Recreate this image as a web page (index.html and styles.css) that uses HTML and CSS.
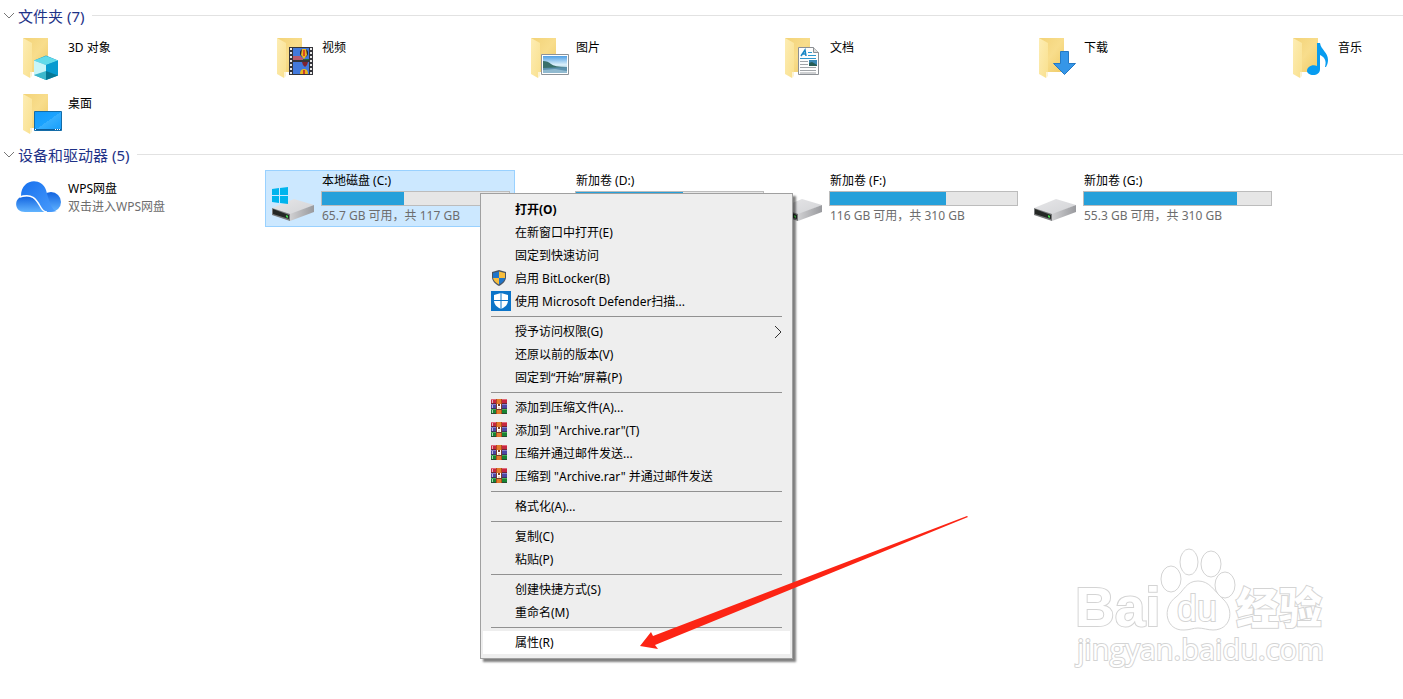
FILE: index.html
```
<!DOCTYPE html>
<html lang="zh-CN">
<head>
  <meta charset="utf-8">
  <title>此电脑</title>
  <meta name="viewport" content="width=device-width, initial-scale=1">
  <link rel="stylesheet" href="styles.css">
</head>
<body>

<!-- shared drawings -->
<svg class="defs" aria-hidden="true">
  <defs>
    <linearGradient id="gBack" x1="0" y1="0" x2="1" y2="1"><stop offset="0" stop-color="#f3d378"/><stop offset=".5" stop-color="#f8dd8c"/><stop offset="1" stop-color="#efcb67"/></linearGradient>
    <linearGradient id="gFront" x1="0" y1="0" x2="1" y2="1"><stop offset="0" stop-color="#fdedb4"/><stop offset="1" stop-color="#f9e08e"/></linearGradient>
    <linearGradient id="gDesk" x1="0" y1="0" x2="1" y2="1"><stop offset="0" stop-color="#129bfa"/><stop offset=".5" stop-color="#1ba3ff"/><stop offset=".5" stop-color="#37b0ff"/><stop offset="1" stop-color="#149dfb"/></linearGradient>
    <linearGradient id="gSky" x1="0" y1="0" x2="0" y2="1"><stop offset="0" stop-color="#4f9fe4"/><stop offset=".5" stop-color="#d8eefa"/><stop offset="1" stop-color="#9dc8dd"/></linearGradient>
    <linearGradient id="gCloud" x1="0" y1="0" x2="1" y2="1"><stop offset="0" stop-color="#1670ee"/><stop offset="1" stop-color="#4b9dfc"/></linearGradient>
    <linearGradient id="gCloud2" x1="0" y1="0" x2="0" y2="1"><stop offset="0" stop-color="#1264e0"/><stop offset="1" stop-color="#62b4ff"/></linearGradient>
    <linearGradient id="gTop" x1="0" y1="0" x2="1" y2="1"><stop offset="0" stop-color="#e6e6e8"/><stop offset="1" stop-color="#d2d3d6"/></linearGradient>
    <linearGradient id="gSide" x1="0" y1="0" x2="1" y2="0"><stop offset="0" stop-color="#d0d0d2"/><stop offset="1" stop-color="#999a9e"/></linearGradient>
    <symbol id="folder" viewBox="0 0 56 56">
      <path d="M12 7h25v34H20z" fill="url(#gBack)"/>
      <path d="M21 12v29l-1 1-1 5-7-4V7z" fill="url(#gFront)"/>
      <path d="M19 41l2 0v4l-2 2z" fill="#fdf3d3"/>
    </symbol>
    <symbol id="drive" viewBox="0 0 56 56">
      <path d="M7 38L29 29l20 6-24 10z" fill="url(#gTop)"/>
      <path d="M25 44l24-9v7L25 51z" fill="url(#gSide)"/>
      <path d="M7 38l18 6v7L7 45z" fill="#77797b"/>
      <path d="M8 39l16 6v4L8 44z" fill="#242725"/>
      <path d="M21 45l2 1v2l-2-1z" fill="#43d94c"/>
    </symbol>
    <symbol id="rar" viewBox="0 0 16 16">
      <path d="M0 0h16v5H0z" fill="#c6273f"/><path d="M0 0h16v1H0z" fill="#e2677a"/>
      <path d="M0 5h16v5H0z" fill="#4d47a5"/><path d="M0 5h16v1H0z" fill="#8580cc"/>
      <path d="M0 10h16v5H0z" fill="#188332"/><path d="M0 10h16v1H0z" fill="#47ae57"/>
      <path d="M0 4h16v1H0zM0 9h16v1H0zM0 14h16v1H0z" fill="#30262e" opacity=".6"/>
      <path d="M1 1h1v3H1zM1 6h1v3H1zM1 11h1v3H1z" fill="#eee" opacity=".7"/>
      <path d="M5 0h6v15H5z" fill="#b04a1c"/><path d="M6 0h4v15H6z" fill="#e47b2b"/>
      <path d="M5 5h6v6H5z" fill="#7a3c2d"/>
      <path d="M6 10V5h1v2h2V5h1v5z" fill="#fff"/><path d="M7 8h2v2H7z" fill="#f1d9c8"/>
    </symbol>
  </defs>
</svg>

<main class="explorer">
  <section>
    <h2 class="group"><svg class="chevron" viewBox="0 0 12 8"><path d="M1 1l5 5 5-5"/></svg>文件夹 (7)</h2>
    <ul class="tiles">
      <li class="tile">
        <svg class="icon" viewBox="0 0 56 56"><use href="#folder"/>
          <path d="M35 24.500l12 5v15L35 49l-12-5V29.500z" fill="#1b9bc6"/>
          <path d="M35 25l12 4.500L35 34l-12-4.500z" fill="#62dbea"/><path d="M23 29.500L35 34v9l-12 1z" fill="#c8f5f8"/>
          <path d="M35 34l12-4.500v15L35 41z" fill="#079bd0"/><path d="M23 44l12-4v9z" fill="#3cb8cc"/><path d="M35 40l12 4.500L35 49z" fill="#067895"/>
        </svg>
        <div class="info"><span class="name">3D 对象</span></div>
      </li>
      <li class="tile">
        <svg class="icon" viewBox="0 0 56 56"><use href="#folder"/>
          <path d="M24 16h24v28H24z" fill="#34343a"/>
          <path d="M28 17h16v12H28zM28 31h16v12H28z" fill="#4279dc"/>
          <path d="M28 25h7l4 3v1H28z" fill="#b75b70"/><path d="M38 28h6v1h-6z" fill="#256b3b"/>
          <ellipse cx="39" cy="22" rx="4" ry="4" fill="#2a242c"/><path d="M37 18h4l1 6-3 4-3-4z" fill="#eeb720"/><path d="M38 19h2v6h-2z" fill="#d84b24"/>
          <path d="M37 31h6l-1 3-2 2-2-2z" fill="#7f2330"/><path d="M35 43q0-5 4-5t4 5z" fill="#e9b71e"/><path d="M38 39h2v4h-2z" fill="#c83e30"/>
          <path d="M26 17v27M46 17v27" stroke="#e8e8e8" stroke-width="2" stroke-dasharray="2 2"/>
        </svg>
        <div class="info"><span class="name">视频</span></div>
      </li>
      <li class="tile">
        <svg class="icon" viewBox="0 0 56 56"><use href="#folder"/>
          <path d="M22.500 23.500h27v20h-27z" fill="#fff" stroke="#8c9298"/>
          <path d="M24 25h24v17H24z" fill="url(#gSky)"/><path d="M24 30q5 0 8 3t16 3v2H24z" fill="#39706a"/><path d="M24 37l24-1v6H24z" fill="#5b91ae"/><path d="M24 39l12-1 12 2v2H24z" fill="#91bad0"/>
        </svg>
        <div class="info"><span class="name">图片</span></div>
      </li>
      <li class="tile">
        <svg class="icon" viewBox="0 0 56 56"><use href="#folder"/>
          <path d="M25.500 16.500h15l5 5v22h-20z" fill="#fdfdfd" stroke="#8b8f94"/><path d="M40.500 16.500v5h5" fill="#ddd" stroke="#8b8f94"/>
          <path d="M28 25l4-6 1 6M29 23h4" fill="none" stroke="#1887c5" stroke-width="1.500"/>
          <path d="M35 21.500h4M35 24.500h8M27 27.500h16" stroke="#2e97cd"/>
          <path d="M27 30.500h8M27 33.500h8M27 36.500h16M27 39.500h16M27 42h16" stroke="#a0a4a8"/>
          <path d="M36 29h8v6h-8z" fill="#3987b4"/><path d="M36 32l3-1 5 3v1h-8z" fill="#275d55"/>
        </svg>
        <div class="info"><span class="name">文档</span></div>
      </li>
      <li class="tile">
        <svg class="icon" viewBox="0 0 56 56"><use href="#folder"/>
          <path d="M33.500 20.500h8v12h7L37.500 43.500l-11-11h7z" fill="#3596e8" stroke="#2479c4"/>
        </svg>
        <div class="info"><span class="name">下载</span></div>
      </li>
      <li class="tile">
        <svg class="icon" viewBox="0 0 56 56"><use href="#folder"/>
          <path d="M36 12h3c1 7 8 9 8 17 0 3-1 5-2 7h-1c2-7-1-10-5-12v14c0 4-3 6-7 6-3 0-6-2-6-4 0-4 5-7 10-5z" fill="#079cf0"/>
        </svg>
        <div class="info"><span class="name">音乐</span></div>
      </li>
      <li class="tile">
        <svg class="icon" viewBox="0 0 56 56"><use href="#folder"/>
          <path d="M23.500 24.500h27v19h-27z" fill="url(#gDesk)" stroke="#146ca8"/><path d="M24 42.500h26" stroke="#0c5d9c"/><path d="M24 42.500h1M44 42.500h1M46 42.500h1M48 42.500h1" stroke="#fff"/>
        </svg>
        <div class="info"><span class="name">桌面</span></div>
      </li>
    </ul>
  </section>

  <section>
    <h2 class="group"><svg class="chevron" viewBox="0 0 12 8"><path d="M1 1l5 5 5-5"/></svg>设备和驱动器 (5)</h2>
    <ul class="tiles devices">
      <li class="tile">
        <svg class="icon" viewBox="0 0 56 56">
          <circle cx="40" cy="32" r="10" fill="url(#gCloud2)"/>
          <path d="M10 26C10 8 31 7 35 20c2 7 6 22 11 21-3 1-10 1-13 1-6 0-8-18-23-16z" fill="url(#gCloud)"/>
          <path d="M10 27c12-3 15 4 19 10 2 3 4 5 6 5H14C3 42 3 29 10 27z" fill="url(#gCloud2)"/>
          <path d="M9 27c12-4 16 2 20 9 2 4 4 6 7 6" fill="none" stroke="#fff" stroke-width="1.500"/>
        </svg>
        <div class="info"><span class="name">WPS网盘</span><span class="detail">双击进入WPS网盘</span></div>
      </li>
      <li class="tile drive selected">
        <svg class="icon" viewBox="0 0 56 56"><use href="#drive"/>
          <path d="M7 19l7-1v7H7zM15 18l8-1v8h-8zM7 26h7v7l-7-1zM15 26h8v8l-8-1z" fill="#00b4ed"/>
        </svg>
        <div class="info"><label class="name" for="diskC">本地磁盘 (C:)</label><progress id="diskC" max="100" value="44"></progress><span class="detail">65.7 GB 可用，共 117 GB</span></div>
      </li>
      <li class="tile drive">
        <svg class="icon" viewBox="0 0 56 56"><use href="#drive"/></svg>
        <div class="info"><label class="name" for="diskD">新加卷 (D:)</label><progress id="diskD" max="100" value="57"></progress></div>
      </li>
      <li class="tile drive">
        <svg class="icon" viewBox="0 0 56 56"><use href="#drive"/></svg>
        <div class="info"><label class="name" for="diskF">新加卷 (F:)</label><progress id="diskF" max="100" value="62"></progress><span class="detail">116 GB 可用，共 310 GB</span></div>
      </li>
      <li class="tile drive">
        <svg class="icon" viewBox="0 0 56 56"><use href="#drive"/></svg>
        <div class="info"><label class="name" for="diskG">新加卷 (G:)</label><progress id="diskG" max="100" value="82"></progress><span class="detail">55.3 GB 可用，共 310 GB</span></div>
      </li>
    </ul>
  </section>
</main>

<!-- context menu of drive C -->
<div class="menu">
  <button type="button" class="default">打开(O)</button>
  <button type="button">在新窗口中打开(E)</button>
  <button type="button">固定到快速访问</button>
  <button type="button"><svg class="small" viewBox="0 0 16 16"><path d="M8 0l7 2v5c0 4-3 7-7 9-4-2-7-5-7-9V2z" fill="#4b5563"/><path d="M8 1.500v6.500H2V3z" fill="#1f75c9"/><path d="M8 1.500L14 3v5H8z" fill="#f8bd3c"/><path d="M2 8h6v6.500C5 13 2.500 11 2 8z" fill="#f8bd3c"/><path d="M14 8H8v6.500c3-1.500 5.500-3.500 6-6.500z" fill="#1f75c9"/></svg>启用 BitLocker(B)</button>
  <button type="button"><svg class="large" viewBox="0 0 20 20"><path d="M0 0h20v20H0z" fill="#0c74c8"/><path d="M10 2l7 2v5c0 5-3 7-7 9-4-2-7-4-7-9V4z" fill="#fff"/><path d="M10 2v16M3 9.500h14" stroke="#0c74c8"/></svg>使用 Microsoft Defender扫描...</button>
  <hr>
  <button type="button">授予访问权限(G)<svg class="more" viewBox="0 0 8 14"><path d="M1 1l6 6-6 6"/></svg></button>
  <button type="button">还原以前的版本(V)</button>
  <button type="button">固定到“开始”屏幕(P)</button>
  <hr>
  <button type="button"><svg class="small"><use href="#rar"/></svg>添加到压缩文件(A)...</button>
  <button type="button"><svg class="small"><use href="#rar"/></svg>添加到 "Archive.rar"(T)</button>
  <button type="button"><svg class="small"><use href="#rar"/></svg>压缩并通过邮件发送...</button>
  <button type="button"><svg class="small"><use href="#rar"/></svg>压缩到 "Archive.rar" 并通过邮件发送</button>
  <hr>
  <button type="button">格式化(A)...</button>
  <hr>
  <button type="button">复制(C)</button>
  <button type="button">粘贴(P)</button>
  <hr>
  <button type="button">创建快捷方式(S)</button>
  <button type="button">重命名(M)</button>
  <hr>
  <button type="button" class="active">属性(R)</button>
</div>

<svg class="arrow" viewBox="0 0 330 136"><path d="M328 1L14 121l-2-4L1 131l18 3-3-4L329 2z"/></svg>

<svg class="watermark" viewBox="0 0 270 130">
  <text x="15" y="81" font-size="55">Bai</text>
  <ellipse cx="111" cy="34" rx="10" ry="13"/>
  <ellipse cx="129" cy="17" rx="9" ry="13"/>
  <ellipse cx="151" cy="19" rx="10" ry="13"/>
  <ellipse cx="165" cy="40" rx="10" ry="13"/>
  <path d="M138 36c-12 0-14 10-22 16-15 11-10 34 8 33 6 0 9-2 14-2s10 2 15 2c18 0 22-20 10-31-9-8-13-18-25-18z"/>
  <text class="du" x="117" y="76" font-size="36">du</text>
  <text class="cn" x="176" y="79" font-size="43">经验</text>
  <text class="url" x="17" y="115" font-size="29">jingyan.baidu.com</text>
</svg>

</body>
</html>
```
FILE: styles.css
```
/* page */
body {
  margin: 0;
  background: #fff;
  color: #000;
  font: 12px/18px "Noto Sans", "Noto Sans CJK SC", sans-serif;
}

.defs {
  position: absolute;
  width: 0;
  height: 0;
}

.explorer {
  padding-top: 4px;
}

/* group headings */
.group {
  display: flex;
  align-items: center;
  height: 23px;
  margin: 0 0 4px;
  padding-left: 3px;
  color: #1e3287;
  font-size: 15px;
  font-weight: normal;
}

.group::after {
  content: "";
  flex: 1;
  height: 1px;
  margin-left: 8px;
  background: #e2e2e2;
}

.chevron {
  width: 12px;
  height: 8px;
  margin-right: 3px;
  fill: none;
  stroke: #777;
}

/* tiles */
.tiles {
  display: grid;
  grid-template-columns: repeat(5, 250px) minmax(0, 1fr);
  grid-auto-rows: 56px;
  column-gap: 4px;
  margin: 0;
  padding: 0 0 0 11px;
  list-style: none;
}

.devices {
  grid-auto-rows: 57px;
}

.tile {
  display: flex;
}

.icon {
  flex: none;
  width: 56px;
  height: 56px;
}

.info {
  display: flex;
  flex: 1;
  flex-direction: column;
  padding: 8px 5px 0 1px;
}

.devices .info {
  padding-top: 10px;
}

.devices .drive .info {
  padding: 2px 5px 0 0;
}

.drive .name, .drive .detail {
  padding-left: 1px;
}

.detail {
  color: #6d6d6d;
}

.selected {
  background: #cce8ff;
  outline: 1px solid #99d1ff;
  outline-offset: -1px;
}

progress {
  -webkit-appearance: none;
  appearance: none;
  box-sizing: border-box;
  width: 100%;
  height: 15px;
  margin: 1px 0;
  border: 1px solid #bcbcbc;
}

progress::-webkit-progress-bar {
  background: #e6e6e6;
}

progress::-webkit-progress-value {
  background: #26a0da;
}

/* context menu */
.menu {
  position: absolute;
  left: 480px;
  top: 193px;
  box-sizing: border-box;
  width: 313px;
  padding: 4px 2px;
  border: 1px solid #a0a0a0;
  background: #eee;
  box-shadow: 3px 3px 2px rgba(0, 0, 0, 0.5);
}

.menu button {
  position: relative;
  display: flex;
  align-items: center;
  width: 100%;
  height: 23px;
  padding: 0 8px 0 32px;
  border: none;
  background: none;
  color: #000;
  font: inherit;
  text-align: left;
}

.menu .default {
  font-weight: bold;
}

.menu .active {
  background: #fff;
}

.menu hr {
  height: 1px;
  margin: 3px 8px;
  border: none;
  background: #919191;
}

.small, .large {
  position: absolute;
  left: 8px;
  top: 3px;
  width: 16px;
  height: 16px;
}

.large {
  top: 1px;
  width: 20px;
  height: 20px;
}

.more {
  width: 8px;
  height: 14px;
  margin-left: auto;
  fill: none;
  stroke: #333;
}

/* red pointer over the menu */
.arrow {
  position: absolute;
  left: 639px;
  top: 515px;
  width: 330px;
  height: 136px;
  fill: #fc2414;
  pointer-events: none;
}

/* site mark */
.watermark {
  position: absolute;
  left: 1060px;
  top: 545px;
  width: 270px;
  height: 130px;
  fill: #fff;
  stroke: #d4d4d4;
  stroke-width: 1;
}

.watermark text {
  font-family: "Liberation Sans", sans-serif;
  font-weight: bold;
  stroke-width: 2;
  paint-order: stroke;
}

.watermark .du {
  font-weight: normal;
}

.watermark .cn {
  font-family: "Noto Sans CJK SC", sans-serif;
  font-weight: 900;
}

.watermark .url {
  font-family: "Open Sans", sans-serif;
  font-weight: normal;
}
```
